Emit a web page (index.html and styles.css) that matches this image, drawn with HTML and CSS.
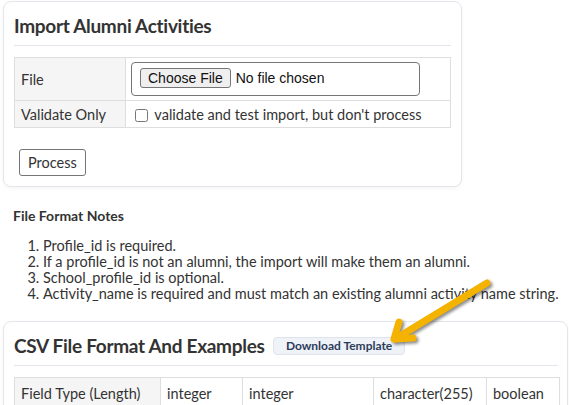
FILE: index.html
```html
<!DOCTYPE html>
<html lang="en">
<head>
  <meta charset="UTF-8">
  <title>Import Alumni Activities</title>
  <meta name="viewport" content="width=device-width, initial-scale=1.0">
  <link rel="stylesheet" href="styles.css">
</head>
<body>

  <div class="page">
    <div class="card card-import">
      <h2 class="card-title">Import Alumni Activities</h2>

      <table class="form-table">
        <tr class="row-file">
          <th>File</th>
          <td><input type="file" class="file-input"></td>
        </tr>
        <tr>
          <th>Validate Only</th>
          <td>
            <label class="check">
              <input type="checkbox"> validate and test import, but don't process
            </label>
          </td>
        </tr>
      </table>

      <button class="btn-process">Process</button>
    </div>

    <h4 class="notes-title">File Format Notes</h4>
    <ol class="notes">
      <li>Profile_id is required.</li>
      <li>If a profile_id is not an alumni, the import will make them an alumni.</li>
      <li>School_profile_id is optional.</li>
      <li>Activity_name is required and must match an existing alumni activity name string.</li>
    </ol>

    <div class="card card-csv">
      <h2 class="card-title">CSV File Format And Examples <button class="btn-template">Download Template</button></h2>

      <table class="csv-table">
        <colgroup>
          <col class="c1"><col class="c2"><col class="c3"><col class="c4"><col class="c5">
        </colgroup>
        <tr>
          <th>Field Type (Length)</th>
          <td>integer</td>
          <td>integer</td>
          <td>character(255)</td>
          <td>boolean</td>
        </tr>
      </table>
    </div>

    <!-- callout arrow pointing at the template button -->
    <svg class="callout-arrow" width="120" height="80" viewBox="0 0 120 80">
      <path d="M107 13 L15 69" />
      <path d="M19 52 L14 69 L33 68" />
    </svg>
  </div>

</body>
</html>
```

FILE: styles.css
```css
:root {
  --text: #333;
  --border: #e2e5eb;
  --cell-border: #dedede;
  --cell-head: #f5f5f5;
  --arrow: #f5b301;
}

html, body {
  margin: 0;
  padding: 0;
  background: #fff;
  overflow: hidden;
}

body {
  font-family: Lato, "Noto Sans", sans-serif;
  color: var(--text);
  font-size: 14.5px;
}

.page {
  position: relative;
  padding: 1px 0 0 3px;
}

.card {
  box-sizing: border-box;
  background: #fff;
  border: 1px solid var(--border);
  border-radius: 8px;
  box-shadow: 0 2px 4px rgba(0,0,0,0.04);
  padding: 0 10px 10px;
}

.card-import {
  width: 459px;
}

.card-csv {
  width: 565px;
  margin-top: 19px;
  padding-right: 9px;
}

.card-title {
  margin: 0;
  padding: 11px 0 7px;
  line-height: 25px;
  font-size: 19px;
  letter-spacing: -0.3px;
  font-weight: 700;
  color: var(--text);
  border-bottom: 1px solid var(--border);
}

/* import form */

.form-table {
  width: 100%;
  margin-top: 11px;
  border-collapse: collapse;
}

.form-table th,
.form-table td {
  border: 1px solid var(--cell-border);
  text-align: left;
  font-weight: normal;
  font-size: 14.5px;
  padding: 4px 5px;
  height: 18px;
}

.form-table th {
  width: 99px;
  background: var(--cell-head);
  padding-left: 6px;
}

.row-file th,
.row-file td {
  height: 34px;
}

.file-input {
  box-sizing: border-box;
  width: 289px;
  height: 34px;
  padding: 5px 8px;
  border: 1px solid #767676;
  border-radius: 4px;
  font-family: "Liberation Sans", Arial, sans-serif;
  font-size: 14px;
  color: #111;
}

.file-input::file-selector-button {
  font-family: "Liberation Sans", Arial, sans-serif;
  font-size: 14px;
  padding: 1px 7px;
  margin-right: 5px;
  border: 1px solid #767676;
  border-radius: 3px;
  background: #efefef;
  color: #111;
}

.check {
  display: block;
}

.check input {
  width: 13px;
  height: 13px;
  margin: 0 3px 0 4px;
  vertical-align: -2px;
}

.btn-process {
  margin: 21px 0 0 5px;
  padding: 4px 8px;
  font-family: Lato, "Noto Sans", sans-serif;
  font-size: 14.5px;
  line-height: 17px;
  color: var(--text);
  background: #fff;
  border: 1px solid #757575;
  border-radius: 3px;
}

/* notes */

.notes-title {
  margin: 21px 0 0 10px;
  font-size: 14px;
  line-height: 16px;
  font-weight: 700;
}

.notes {
  margin: 14px 0 0;
  padding-left: 40px;
  line-height: 16px;
}

/* csv section */

.btn-template {
  margin-left: 4px;
  padding: 1px 12px;
  vertical-align: 3px;
  font-family: Lato, "Noto Sans", sans-serif;
  font-size: 12px;
  font-weight: 700;
  line-height: 14px;
  letter-spacing: 0;
  color: #2c3c5a;
  background: #eff2f7;
  border: 1px solid #dfe4ec;
  border-radius: 4px;
}

.csv-table {
  width: 545px;
  margin-top: 11px;
  border-collapse: collapse;
  table-layout: fixed;
}

.csv-table .c1 { width: 146px; }
.csv-table .c2 { width: 82px; }
.csv-table .c3 { width: 131px; }
.csv-table .c4 { width: 113px; }
.csv-table .c5 { width: 73px; }

.csv-table th,
.csv-table td {
  border: 1px solid var(--cell-border);
  text-align: left;
  font-weight: normal;
  font-size: 14.5px;
  padding: 7px 6px;
  line-height: 18px;
}

.csv-table th {
  background: var(--cell-head);
}

.callout-arrow {
  position: absolute;
  left: 380px;
  top: 270px;
  fill: none;
  stroke: var(--arrow);
  stroke-width: 7;
  stroke-linecap: round;
  stroke-linejoin: round;
  filter: drop-shadow(2px 2px 1.5px rgba(0,0,0,0.45));
}
```
